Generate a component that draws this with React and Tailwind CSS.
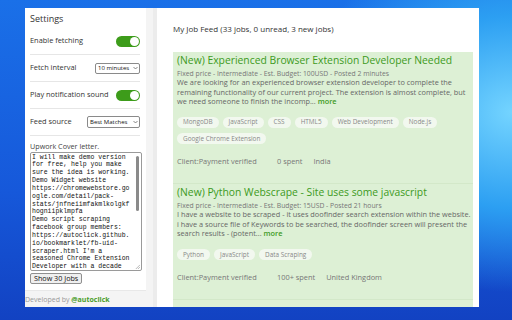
import React from 'react';

const coverLines = [
  'I will make demo version',
  'for free, help you make',
  'sure the idea is working.',
  'Demo Widget website',
  'https://chromewebstore.go',
  'ogle.com/detail/pack-',
  'stats/jnfneiimfakmlkolgkf',
  'hogniipklmpfa',
  'Demo script scraping',
  'facebook group members:',
  'https://autoclick.github.',
  'io/bookmarklet/fb-uid-',
  "scraper.html I'm a",
  'seasoned Chrome Extension',
  'Developer with a decade',
];

const jobs = [
  {
    title: '(New) Experienced Browser Extension Developer Needed',
    meta: 'Fixed price - Intermediate - Est. Budget: 100USD - Posted 2 minutes',
    desc: [
      'We are looking for an experienced browser extension developer to complete the',
      'remaining functionality of our current project. The extension is almost complete, but',
      'we need someone to finish the incomp...',
    ],
    tags: ['MongoDB', 'JavaScript', 'CSS', 'HTML5', 'Web Development', 'Node.js', 'Google Chrome Extension'],
    spent: '0 spent',
    country: 'India',
  },
  {
    title: '(New) Python Webscrape - Site uses some javascript',
    meta: 'Fixed price - Intermediate - Est. Budget: 15USD - Posted 21 hours',
    desc: [
      'I have a website to be scraped - it uses doofinder search extension within the website.',
      'i have a source file of Keywords to be searched, the doofinder screen will present the',
      'search results - (potent...',
    ],
    tags: ['Python', 'JavaScript', 'Data Scraping'],
    spent: '100+ spent',
    country: 'United Kingdom',
  },
];

function Toggle() {
  return (
    <div className="w-[24px] h-[11px] rounded-full bg-[#3d9c1a] flex items-center justify-end pr-[1px]">
      <div className="w-[9px] h-[9px] rounded-full bg-white" />
    </div>
  );
}

function Select({ label, w, h }) {
  return (
    <div className={`${w} ${h} border border-[#8a8a8a] rounded-[2px] bg-white flex items-center justify-between pl-[2px] pr-[1.5px] text-[6px] text-[#111] whitespace-nowrap`}>
      <span>{label}</span>
      <svg width="5" height="4" viewBox="0 0 10 6" fill="none" stroke="#555" strokeWidth="1.4">
        <path d="M1 1l4 4 4-4" />
      </svg>
    </div>
  );
}

function Row({ label, children }) {
  return (
    <div className="h-[27px] border-b border-[#e6e6e6] flex items-center justify-between">
      <span className="text-[7.4px] text-[#333]">{label}</span>
      {children}
    </div>
  );
}

function JobCard({ job }) {
  return (
    <div className="px-[4px] pt-[2px] pb-[17.5px] border-b border-[#d3e8c9]">
      <div className="text-[10.35px] leading-[13px] text-[#3c9a1c] whitespace-nowrap">{job.title}</div>
      <div className="mt-[1.5px] text-[6.8px] leading-[9px] text-[#777] whitespace-nowrap">{job.meta}</div>
      <div className="mt-[0.5px] text-[7.35px] leading-[9.6px] text-[#666]">
        {job.desc.map((l, i) => (
          <div key={i} className="whitespace-nowrap">
            {l}
            {i === job.desc.length - 1 && <span className="text-[#3c9a1c] font-semibold"> more</span>}
          </div>
        ))}
      </div>
      <div className="mt-[10px] flex flex-wrap gap-x-[4px] gap-y-[5.5px]">
        {job.tags.map((t) => (
          <span key={t} className="h-[11px] px-[6px] rounded-full bg-[#f2f8ef] text-[6.4px] text-[#888] flex items-center">
            {t}
          </span>
        ))}
      </div>
      <div className="mt-[12.5px] flex text-[7.4px] leading-[9px] text-[#777]">
        <span className="w-[100px]">Client:Payment verified</span>
        <span>{job.spent}</span>
        <span className="ml-[11px]">{job.country}</span>
      </div>
    </div>
  );
}

export default function App() {
  return (
    <div
      className="w-[512px] h-[320px] overflow-hidden pl-[25px] pt-[8px] bg-[image:radial-gradient(ellipse_55%_75%_at_100%_35%,#74d4ff_0%,#2c9ff2_40%,transparent_75%),linear-gradient(180deg,#1a70e8_0%,#1658da_60%,#1242c2_100%)]"
      style={{ fontFamily: '"Open Sans", "Noto Sans", sans-serif' }}
    >
      <div className="w-[454px] h-[299px] flex overflow-hidden bg-white">
        {/* sidebar */}
        <aside className="w-[132px] bg-[#f4f4f4] border-r-[4px] border-[#ececec] flex flex-col">
          <div className="w-[121px] bg-white border-b border-[#e8e8e8] pl-[5px] pr-[6px] pb-[6px] flex flex-col">
            <div className="h-[20px] flex items-center text-[9px] text-[#333] pt-[1px]">Settings</div>
            <Row label="Enable fetching">
              <Toggle />
            </Row>
            <Row label="Fetch interval">
              <Select label="10 minutes" w="w-[45px]" h="h-[11px]" />
            </Row>
            <Row label="Play notification sound">
              <Toggle />
            </Row>
            <Row label="Feed source">
              <Select label="Best Matches" w="w-[53px]" h="h-[12px]" />
            </Row>
            <div className="mt-[5px] text-[7.2px] leading-[10px] text-[#444]">Upwork Cover letter.</div>
            <div className="relative mt-[1px] w-[112px] h-[119px] border border-[#9a9a9a] rounded-[2px] overflow-hidden pl-[1px] pt-[0.5px]">
              <div className="text-[6.5px] leading-[7.85px] text-[#111]" style={{ fontFamily: '"Liberation Mono", "DejaVu Sans Mono", monospace' }}>
                {coverLines.map((l, i) => (
                  <div key={i} className="whitespace-nowrap">{l}</div>
                ))}
              </div>
              <div className="absolute right-[2px] top-[3px] w-[3px] h-[55px] rounded-full bg-[#8a8a8a]" />
              <svg className="absolute right-[1px] bottom-[1px]" width="5" height="5" viewBox="0 0 6 6" stroke="#999" strokeWidth="0.8">
                <path d="M6 1L1 6M6 3.5L3.5 6" />
              </svg>
            </div>
            <div className="mt-[2px] flex">
              <button className="h-[11px] px-[3px] border border-[#8f8f8f] rounded-[2px] bg-[#efefef] text-[7.2px] text-[#111] leading-none">
                Show 30 Jobs
              </button>
            </div>
          </div>
          <div className="mt-[4px] text-[7px] leading-[10px] text-[#999] whitespace-nowrap">
            Developed by <span className="text-[#4a9d2a] font-bold">@autoclick</span>
          </div>
        </aside>

        {/* main */}
        <main className="flex-1 bg-white pl-[16px] pr-[6px] overflow-hidden">
          <div className="mt-[14.5px] h-[11px] text-[8px] leading-[11px] text-[#333]">
            My Job Feed (33 jobs, 0 unread, 3 new jobs)
          </div>
          <div className="mt-[18.5px] bg-[#ddf0d5] h-[300px]">
            {jobs.map((j) => (
              <JobCard key={j.title} job={j} />
            ))}
          </div>
        </main>
      </div>
    </div>
  );
}
